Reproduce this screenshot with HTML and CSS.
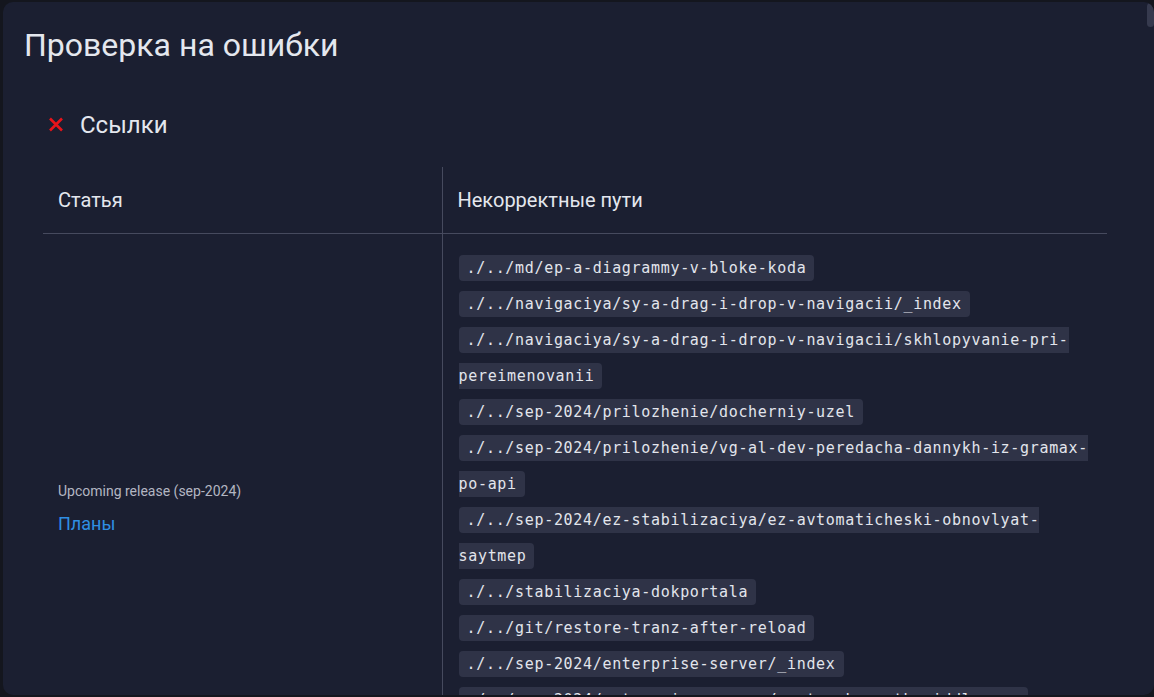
FILE: index.html
```html
<!DOCTYPE html>
<html lang="ru">
<head>
<meta charset="utf-8">
<title>Проверка на ошибки</title>
<link rel="stylesheet" href="styles.css">
</head>
<body>
<div class="modal">
  <div class="scroll-thumb"></div>
  <h1 class="title">Проверка на ошибки</h1>
  <section class="section">
    <h2 class="section-head">
      <svg class="x-icon" viewBox="0 0 16 16" width="16" height="16" aria-hidden="true">
        <path d="M2 1.5 L14 13.5 M14 1.5 L2 13.5" stroke="#e8141a" stroke-width="2.6" stroke-linecap="butt" fill="none"/>
      </svg>
      <span>Ссылки</span>
    </h2>
    <table class="errors">
      <thead>
        <tr>
          <th class="col-article">Статья</th>
          <th class="col-paths">Некорректные пути</th>
        </tr>
      </thead>
      <tbody>
        <tr>
          <td class="col-article">
            <div class="article">
              <div class="article-path">Upcoming release (sep-2024)</div>
              <a class="article-link" href="#">Планы</a>
            </div>
          </td>
          <td class="col-paths">
            <div class="path"><code>./../md/ep-a-diagrammy-v-bloke-koda</code></div>
            <div class="path"><code>./../navigaciya/sy-a-drag-i-drop-v-navigacii/_index</code></div>
            <div class="path"><code>./../navigaciya/sy-a-drag-i-drop-v-navigacii/skhlopyvanie-pri-pereimenovanii</code></div>
            <div class="path"><code>./../sep-2024/prilozhenie/docherniy-uzel</code></div>
            <div class="path"><code>./../sep-2024/prilozhenie/vg-al-dev-peredacha-dannykh-iz-gramax-po-api</code></div>
            <div class="path"><code>./../sep-2024/ez-stabilizaciya/ez-avtomaticheski-obnovlyat-saytmep</code></div>
            <div class="path"><code>./../stabilizaciya-dokportala</code></div>
            <div class="path"><code>./../git/restore-tranz-after-reload</code></div>
            <div class="path"><code>./../sep-2024/enterprise-server/_index</code></div>
            <div class="path"><code>./../sep-2024/enterprise-server/nastroyka-auth-middleware</code></div>
            <div class="path"><code>./../sep-2024/enterprise-server/ogranicheniya</code></div>
          </td>
        </tr>
      </tbody>
    </table>
  </section>
</div>
</body>
</html>
```

FILE: styles.css
```css
* {
  box-sizing: border-box;
}

html,
body {
  margin: 0;
  padding: 0;
  height: 100%;
  background: #14161e;
  overflow: hidden;
}

body {
  font-family: Roboto, "Noto Sans", sans-serif;
  color: #e4e7ee;
  padding: 2px 0 2px 3px;
}

.modal {
  position: relative;
  height: 100%;
  background: #1b1f31;
  border-radius: 10px;
  padding: 23px 21px 0 21px;
  overflow: hidden;
}

.scroll-thumb {
  position: absolute;
  top: 1px;
  right: 0;
  width: 7px;
  height: 24px;
  border-radius: 4px;
  background: #363a4e;
}

.title {
  margin: 0;
  font-size: 32px;
  line-height: 40px;
  font-weight: 400;
  color: #e4e7ee;
}

.section {
  padding: 44px 26px 0 19px;
}

.section-head {
  display: flex;
  align-items: center;
  gap: 16px;
  margin: 0 0 26px 5px;
  font-size: 24px;
  line-height: 32px;
  font-weight: 400;
  color: #e4e7ee;
}

.x-icon {
  flex: none;
}

.errors {
  width: 100%;
  border-collapse: collapse;
  table-layout: fixed;
}

.errors th {
  height: 66px;
  padding: 0 16px 0 15px;
  text-align: left;
  font-size: 20px;
  font-weight: 400;
  color: #e4e7ee;
  border-bottom: 1px solid #464a5e;
}

.errors .col-article {
  width: 399px;
  border-right: 1px solid #464a5e;
}

.errors td {
  padding: 16px 15px 16px 16px;
}

.errors td.col-article {
  padding-left: 15px;
  vertical-align: middle;
}

.article {
  padding-top: 14px;
}

.article-path {
  font-size: 14px;
  line-height: 20px;
  color: #b3b6c2;
}

.article-link {
  display: block;
  margin-top: 10px;
  font-size: 18px;
  line-height: 26px;
  color: #2f8fe3;
  text-decoration: none;
}

.errors td.col-paths {
  vertical-align: top;
}

.path {
  line-height: 36px;
}

.path code {
  font-family: "DejaVu Sans Mono", "Liberation Mono", monospace;
  font-size: 15px;
  letter-spacing: 0.68px;
  color: #e2e5ec;
  background: #2f3347;
  border-radius: 4px;
  padding: 4px 8px;
}
```
